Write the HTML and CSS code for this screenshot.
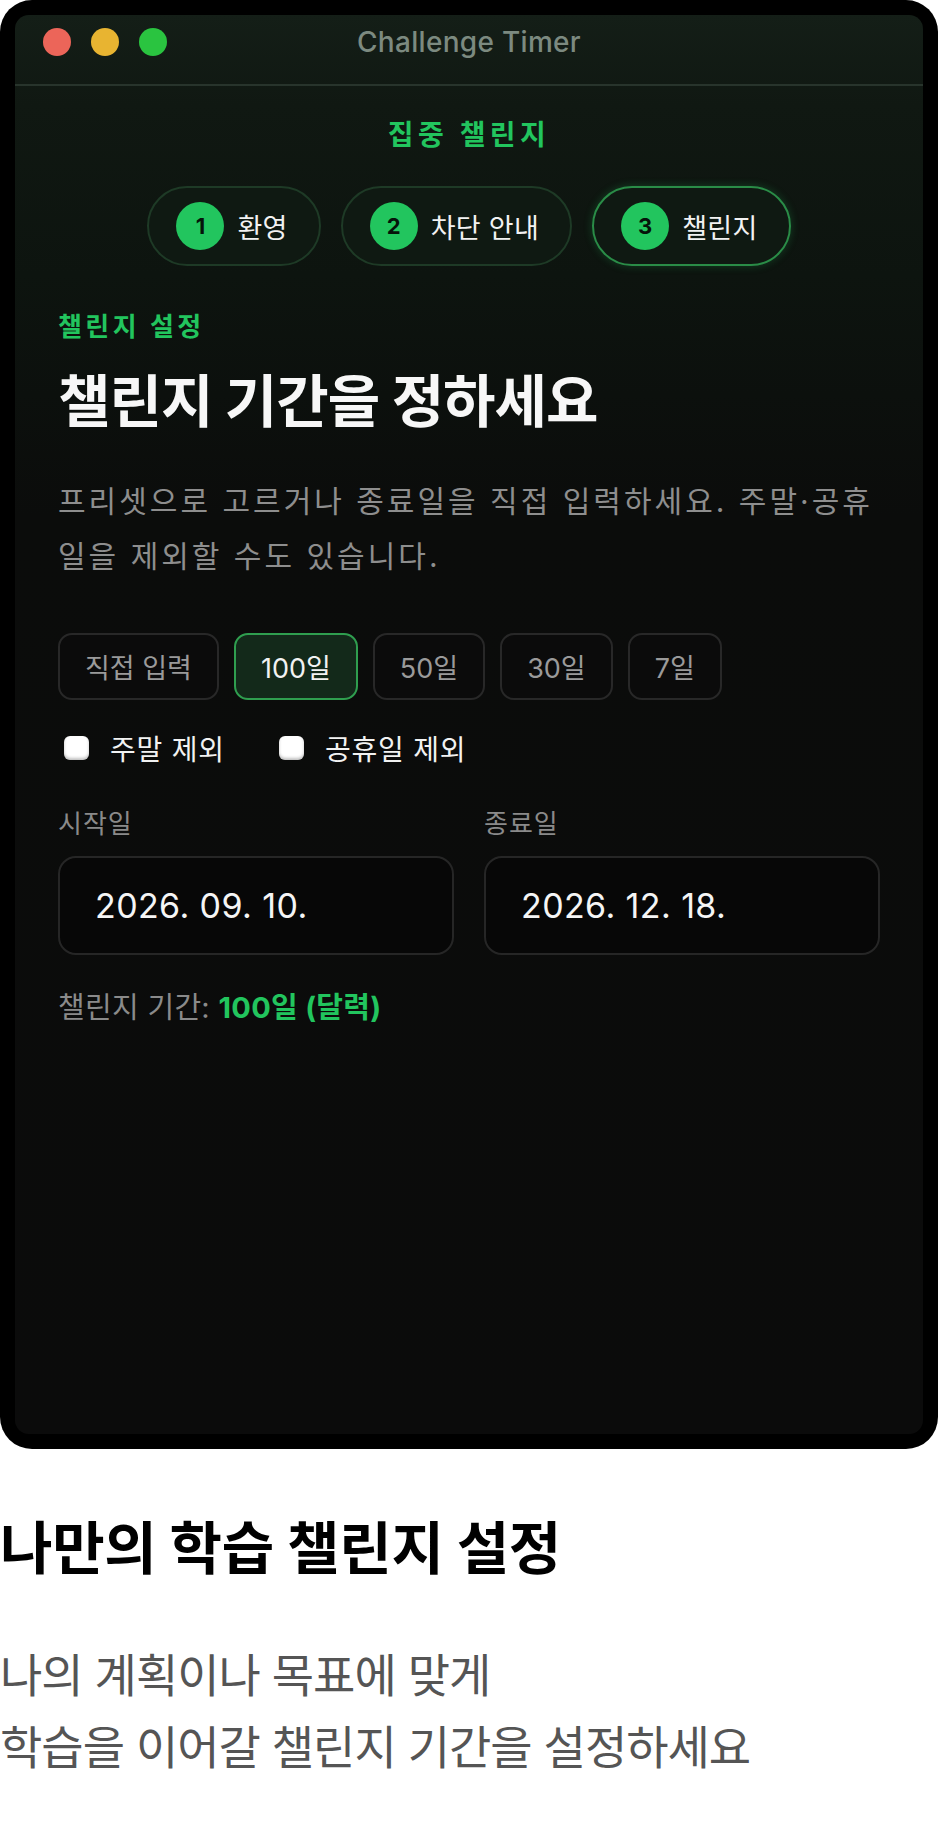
FILE: index.html
```html
<!DOCTYPE html>
<html lang="ko">
<head>
<meta charset="utf-8">
<title>Challenge Timer</title>
<link rel="stylesheet" href="styles.css">
</head>
<body>
<div class="device">
  <div class="window">
    <div class="titlebar">
      <div class="lights">
        <span class="light red"></span>
        <span class="light yellow"></span>
        <span class="light green"></span>
      </div>
      <div class="win-title">Challenge Timer</div>
      <div></div>
    </div>
    <div class="content">
      <div class="app-title">집중 챌린지</div>
      <div class="steps">
        <div class="step"><span class="step-num">1</span><span class="step-label">환영</span></div>
        <div class="step"><span class="step-num">2</span><span class="step-label">차단 안내</span></div>
        <div class="step active"><span class="step-num">3</span><span class="step-label">챌린지</span></div>
      </div>
      <div class="eyebrow">챌린지 설정</div>
      <h1 class="heading">챌린지 기간을 정하세요</h1>
      <p class="desc">프리셋으로 고르거나 종료일을 직접 입력하세요. 주말·공휴일을 제외할 수도 있습니다.</p>
      <div class="presets">
        <button class="preset">직접 입력</button>
        <button class="preset selected">100일</button>
        <button class="preset">50일</button>
        <button class="preset">30일</button>
        <button class="preset">7일</button>
      </div>
      <div class="options">
        <label class="option"><span class="check"></span>주말 제외</label>
        <label class="option"><span class="check"></span>공휴일 제외</label>
      </div>
      <div class="dates">
        <div class="field">
          <div class="field-label">시작일</div>
          <div class="date-box">2026. 09. 10.</div>
        </div>
        <div class="field">
          <div class="field-label">종료일</div>
          <div class="date-box">2026. 12. 18.</div>
        </div>
      </div>
      <div class="summary">챌린지 기간: <strong>100일 (달력)</strong></div>
    </div>
  </div>
</div>
<h2 class="caption-title">나만의 학습 챌린지 설정</h2>
<p class="caption-text">나의 계획이나 목표에 맞게<br>학습을 이어갈 챌린지 기간을 설정하세요</p>
</body>
</html>
```
FILE: styles.css
```css
* { box-sizing: border-box; }
html, body { margin: 0; padding: 0; }
body {
  width: 939px;
  background: #ffffff;
  font-family: "Inter", "Noto Sans CJK KR", sans-serif;
}
.device {
  width: 938px;
  height: 1449px;
  background: #000;
  border-radius: 32px;
  padding: 15px;
}
.window {
  height: 100%;
  border-radius: 14px;
  overflow: hidden;
  background: linear-gradient(180deg, #141e17 0px, #101812 90px, #0d140f 260px, #0b0c0b 500px, #0b0b0b 100%);
}
.titlebar {
  height: 71px;
  padding: 13px 28px 0 28px;
  display: grid;
  grid-template-columns: 1fr auto 1fr;
  align-items: start;
  border-bottom: 2px solid #28342c;
}
.lights { display: flex; gap: 20px; }
.light { width: 28px; height: 28px; border-radius: 50%; display: block; }
.red { background: #ec6559; }
.yellow { background: #e8b431; }
.green { background: #2ac440; }
.win-title {
  font-size: 28px;
  line-height: 28px;
  color: #7c8a80;
  font-weight: 500;
  letter-spacing: 0.3px;
}
.content { padding: 0 43px; }
.app-title {
  margin-top: 31px;
  text-align: center;
  font-size: 28px;
  line-height: 36px;
  font-weight: 600;
  color: #22c55e;
  letter-spacing: 4.4px;
}
.steps {
  margin-top: 33px;
  display: flex;
  justify-content: center;
  gap: 20px;
}
.step {
  height: 80px;
  border-radius: 40px;
  border: 2px solid #1e3a26;
  background: #0f1912;
  display: flex;
  align-items: center;
  gap: 13px;
  padding: 0 31px 0 27px;
}
.step.active {
  border-color: #2a8c47;
  box-shadow: 0 0 8px rgba(34, 197, 94, 0.25);
}
.step-num {
  width: 48px;
  height: 48px;
  border-radius: 50%;
  background: #22c55e;
  color: #05140a;
  font-size: 22px;
  font-weight: 700;
  display: flex;
  align-items: center;
  justify-content: center;
}
.step-label {
  font-size: 27px;
  color: #f2f2f2;
  letter-spacing: 0.3px;
}
.eyebrow {
  margin-top: 45px;
  font-size: 26px;
  line-height: 32px;
  font-weight: 600;
  color: #22c55e;
  letter-spacing: 3.4px;
}
.heading {
  margin: 27px 0 0;
  font-size: 57px;
  line-height: 64px;
  font-weight: 700;
  color: #f7f7f7;
  letter-spacing: -1px;
}
.desc {
  margin: 40px 0 0;
  font-size: 30px;
  line-height: 55px;
  color: #8e8e8e;
  letter-spacing: 3px;
}
.presets {
  margin-top: 49px;
  display: flex;
  gap: 15px;
}
.preset {
  height: 67px;
  padding: 0 25px;
  border-radius: 14px;
  border: 2px solid #282828;
  background: #0b0b0b;
  color: #9a9a9a;
  font-family: inherit;
  font-size: 27px;
}
.preset.selected {
  border-color: #2f9e4f;
  background: #13291a;
  color: #f2f2f2;
}
.options {
  margin-top: 33px;
  display: flex;
  gap: 54px;
  padding-left: 6px;
}
.option {
  display: flex;
  align-items: center;
  gap: 21px;
  height: 30px;
  font-size: 28px;
  color: #f2f2f2;
  letter-spacing: 0.8px;
}
.check {
  width: 25px;
  height: 24px;
  border-radius: 6px;
  background: #fff;
  box-shadow: inset 0 -2px 3px rgba(0, 0, 0, 0.25);
}
.dates {
  margin-top: 46px;
  display: grid;
  grid-template-columns: 1fr 1fr;
  gap: 30px;
}
.field-label {
  font-size: 26px;
  line-height: 30px;
  color: #8a8a8a;
  letter-spacing: 1px;
  margin-bottom: 17px;
}
.date-box {
  height: 99px;
  border: 2px solid #262626;
  border-radius: 18px;
  background: #070707;
  display: flex;
  align-items: center;
  padding-left: 35px;
  font-size: 34px;
  color: #f5f5f5;
  letter-spacing: 0.4px;
}
.summary {
  margin-top: 37px;
  font-size: 29px;
  line-height: 32px;
  color: #8a8a8a;
  letter-spacing: 0.3px;
}
.summary strong { color: #22c55e; font-weight: 700; }
.caption-title {
  margin: 68px 0 0;
  font-size: 57px;
  line-height: 64px;
  font-weight: 700;
  color: #000;
  letter-spacing: -0.3px;
}
.caption-text {
  margin: 58px 0 0;
  font-size: 46px;
  line-height: 72px;
  color: #555;
  letter-spacing: -1px;
}
```
